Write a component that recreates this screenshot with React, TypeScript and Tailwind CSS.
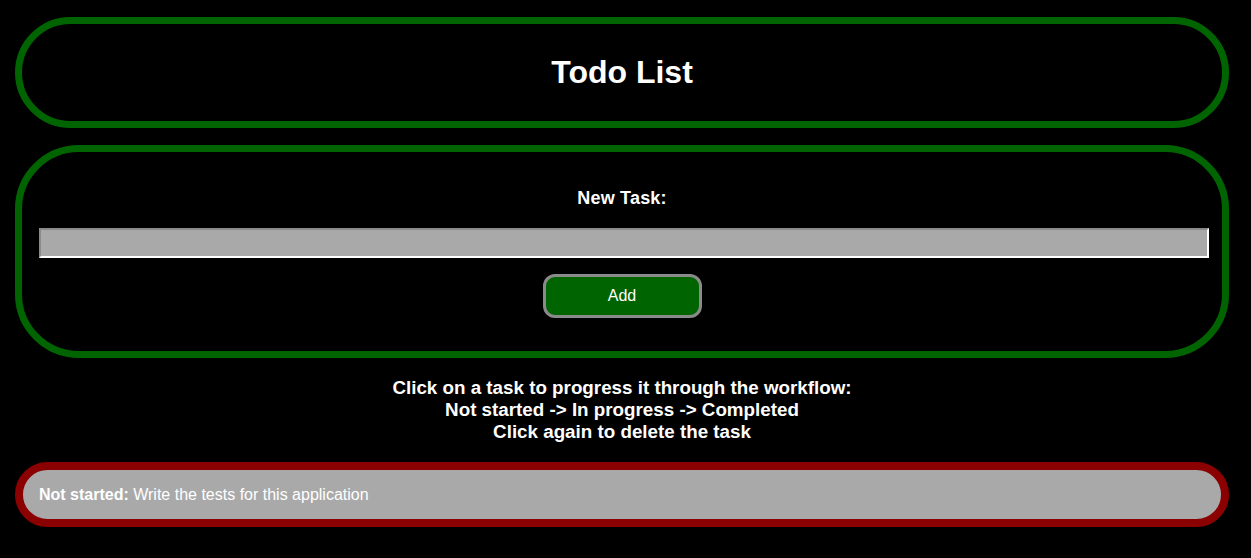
export default function App() {
  return (
    <div className="min-h-[558px] bg-black font-['Liberation_Sans',Arial,sans-serif] text-white pt-[17px]">
      {/* Header */}
      <div className="ml-[15px] w-[1214px] h-[111px] rounded-full border-[7px] border-[#006400] flex items-center justify-center">
        <h1 className="text-[32px] font-bold leading-none -mt-[1px]">Todo List</h1>
      </div>

      {/* New task form */}
      <div className="ml-[15px] mt-[17px] w-[1214px] h-[213px] rounded-[64px] border-[7px] border-[#006400] flex flex-col items-center pt-[36px]">
        <label className="text-[18px] font-bold leading-[21px] tracking-[0.2px]">New Task:</label>
        <input
          type="text"
          className="mt-[19px] ml-[3px] w-[1170px] h-[30px] bg-[#a9a9a9] border-2 border-t-[#8a8a8a] border-l-[#8a8a8a] border-b-white border-r-white outline-none"
        />
        <button className="mt-[16px] w-[159px] h-[44px] rounded-[12px] border-[3px] border-[#8a8a8a] bg-[#006400] text-white text-[16px]">
          Add
        </button>
      </div>

      {/* Instructions */}
      <div className="ml-[15px] w-[1214px] mt-[19px] text-center text-[18.8px] font-bold leading-[22px]">
        <p>Click on a task to progress it through the workflow:</p>
        <p>Not started -&gt; In progress -&gt; Completed</p>
        <p>Click again to delete the task</p>
      </div>

      {/* Tasks */}
      <div className="ml-[15px] mt-[19px] w-[1214px] h-[65px] rounded-full border-[8px] border-[#8b0000] bg-[#a9a9a9] flex items-center pl-[16px] text-[16px]">
        <span className="font-bold">Not started:</span>
        <span>&nbsp;Write the tests for this application</span>
      </div>
    </div>
  );
}
